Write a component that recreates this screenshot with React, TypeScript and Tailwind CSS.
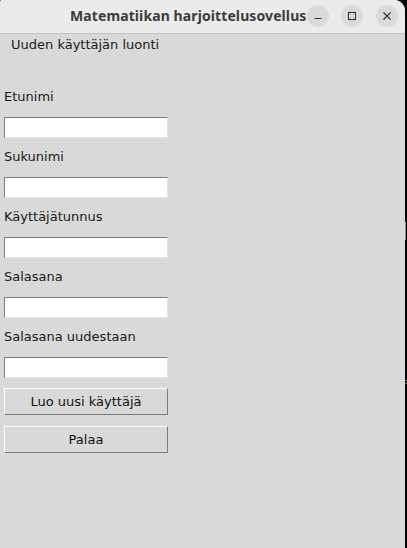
import React from "react";

const font = { fontFamily: '"DejaVu Sans", sans-serif' };

function Field({ label, first }: { label: string; first?: boolean }) {
  return (
    <div className={first ? "flex flex-col" : "flex flex-col mt-[11px]"}>
      <div className="h-[15px] leading-[15px] text-[13px] text-[#1a1a1a] pl-[4px] whitespace-nowrap">{label}</div>
      <div className="mt-[13px] ml-[4px] w-[164px] h-[21px] bg-white border-t border-l border-t-[#7d7d7d] border-l-[#7d7d7d] border-b border-r border-b-[#e3e3e3] border-r-[#e3e3e3]" />
    </div>
  );
}

function Btn({ children, cls }: { children: React.ReactNode; cls?: string }) {
  return (
    <div
      className={
        "ml-[4px] w-[164px] h-[27px] flex items-center justify-center text-[13px] text-[#111] bg-[#d9d9d9] border-t border-l border-t-white border-l-white border-b border-r border-b-[#7d7d7d] border-r-[#7d7d7d] " +
        (cls ?? "")
      }
    >
      {children}
    </div>
  );
}

export default function App() {
  return (
    <div className="w-[407px] h-[548px] bg-black flex overflow-hidden">
      <div className="w-[405px] h-[548px] flex flex-col rounded-tr-[11px] rounded-tl-[2px] overflow-hidden bg-[#d9d9d9]">
        <div className="h-[33px] shrink-0 bg-[#ebebeb] border-b border-b-[#c4c4c4] flex items-center relative" style={{ boxSizing: "content-box" }}>
          <div
            className="absolute left-[70px] top-[7px] text-[14px] tracking-[0.1px] font-bold text-[#3c3c3c] whitespace-nowrap leading-[18px]"
            style={{ fontFamily: '"Noto Sans", "Open Sans", sans-serif' }}
          >
            Matematiikan harjoittelusovellus
          </div>
          <div className="absolute left-[307px] top-[5px] w-[22px] h-[22px] rounded-full bg-[#dadada] flex items-center justify-center">
            <svg width="10" height="10" viewBox="0 0 10 10"><path d="M1.5 7.5h7" stroke="#333" strokeWidth="1.2" /></svg>
          </div>
          <div className="absolute left-[341px] top-[5px] w-[22px] h-[22px] rounded-full bg-[#dadada] flex items-center justify-center">
            <svg width="10" height="10" viewBox="0 0 10 10"><rect x="1.5" y="1.5" width="7" height="7" fill="none" stroke="#333" strokeWidth="1.1" /></svg>
          </div>
          <div className="absolute left-[376px] top-[5px] w-[22px] h-[22px] rounded-full bg-[#dadada] flex items-center justify-center">
            <svg width="10" height="10" viewBox="0 0 10 10"><path d="M1.5 1.5l7 7M8.5 1.5l-7 7" stroke="#333" strokeWidth="1.2" /></svg>
          </div>
        </div>
        <div className="flex flex-col" style={font}>
          <div className="h-[15px] leading-[15px] mt-[3px] pl-[11px] text-[13px] text-[#1a1a1a] whitespace-nowrap">Uuden käyttäjän luonti</div>
          <div className="mt-[37px] flex flex-col">
            <Field label="Etunimi" first />
            <Field label="Sukunimi" />
            <Field label="Käyttäjätunnus" />
            <Field label="Salasana" />
            <Field label="Salasana uudestaan" />
          </div>
          <Btn cls="mt-[10px]">Luo uusi käyttäjä</Btn>
          <Btn cls="mt-[11px]">Palaa</Btn>
        </div>
      </div>
      <div className="w-[2px] flex flex-col">
        <div className="h-[222px]" />
        <div className="h-[18px] w-[1px] bg-[#8a8a8a]" />
        <div className="h-[140px]" />
        <div className="h-[1px] w-[2px] bg-[#5a7a2a]" />
        <div className="h-[2px]" />
        <div className="h-[1px] w-[2px] bg-[#5a7a2a]" />
      </div>
    </div>
  );
}
